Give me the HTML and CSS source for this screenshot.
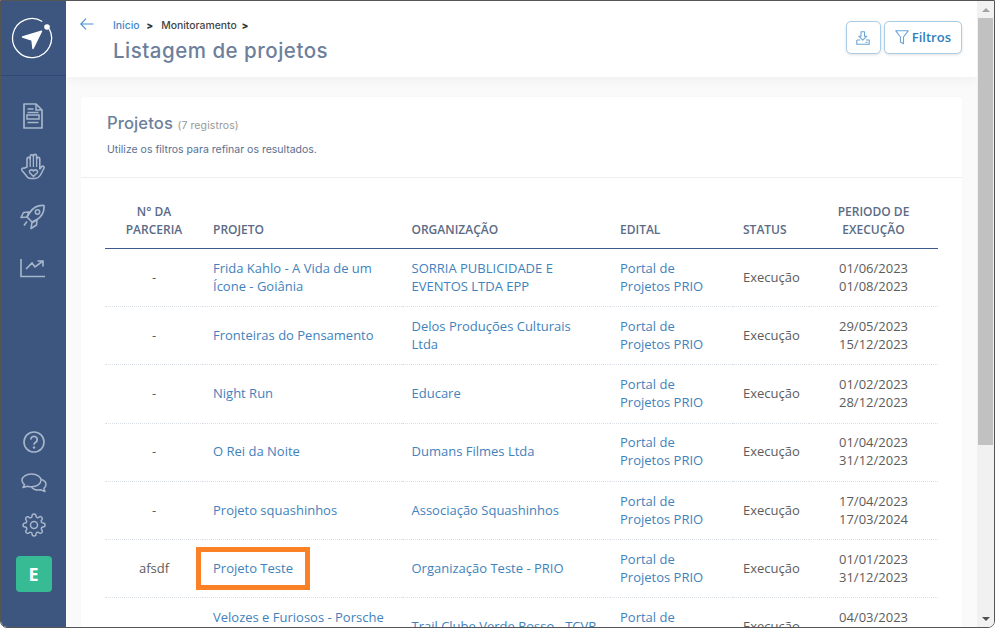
FILE: index.html
```html
<!DOCTYPE html>
<html lang="pt-BR">
<head>
<meta charset="utf-8">
<title>Listagem de projetos</title>
<link rel="stylesheet" href="styles.css">
</head>
<body>
<div class="window">
  <aside class="sidebar">
    <div class="brand">
      <svg class="brand-logo" viewBox="0 0 44 44" width="44" height="44">
        <path d="M32.300 5.500A19.500 19.500 0 1 0 39.200 12.800" fill="none" stroke="#fff" stroke-width="1.300"/>
        <circle cx="37" cy="11" r="2.800" fill="#fff"/>
        <path d="M12.500 21 31.500 15.200 23 32.500 22 24Z" fill="#fff" stroke="#fff" stroke-width="1.500" stroke-linejoin="round"/>
      </svg>
    </div>
    <nav class="nav-top">
      <svg class="nav-icon" viewBox="0 0 24 28" width="24" height="28"><path d="M3 2h12l6 6v18H3Z" fill="none" stroke="#a8b6cb" stroke-width="1.700" stroke-linejoin="round"/><path d="M15 2v6h6M6.500 7h6M6.500 10.500h11M6.500 20.500h11" fill="none" stroke="#a8b6cb" stroke-width="1.500"/><rect x="6" y="13" width="12" height="4" fill="none" stroke="#a8b6cb" stroke-width="1.500"/></svg>
      <svg class="nav-icon" viewBox="0 0 26 28" width="26" height="28"><path d="M7 14V6a1.600 1.600 0 0 1 3.200 0v-2.500a1.600 1.600 0 0 1 3.200 0V3a1.600 1.600 0 0 1 3.200 0v3a1.600 1.600 0 0 1 3.200 0v10l2-2.500c1.500-1 3 .5 2 2l-2.500 5c-1.500 3-3.500 5-6.500 5h-4c-2.500 0-4-1.500-5-3.500L2 17.500c-1-1.500.5-3 2-2.300Z" fill="none" stroke="#a8b6cb" stroke-width="1.600" stroke-linejoin="round"/><path d="M10.200 6v8M13.400 3v11M16.600 5v9" stroke="#a8b6cb" stroke-width="1.300"/><path d="M13.500 23.500 9.800 19.700c-1.500-2 1.500-4 3.700-1.800 2.200-2.200 5.200-.2 3.700 1.800Z" fill="none" stroke="#a8b6cb" stroke-width="1.500"/></svg>
      <svg class="nav-icon" viewBox="0 0 26 26" width="26" height="26"><path d="M24 1.500c-6-.5-11 2-14.500 7.500L7 13l5.500 5.500 4-2.500C22 12.500 24.500 7.500 24 1.500Z" fill="none" stroke="#a8b6cb" stroke-width="1.700" stroke-linejoin="round"/><circle cx="17.500" cy="8" r="2.200" fill="none" stroke="#a8b6cb" stroke-width="1.500"/><path d="M9 8 3.500 8.500 1 13.500l6-.5ZM17 15.500 16.500 21 11 24.500l1-6.500ZM7 17.500l-3 4" fill="none" stroke="#a8b6cb" stroke-width="1.600" stroke-linejoin="round"/></svg>
      <svg class="nav-icon nav-chart" viewBox="0 0 26 20" width="26" height="20"><path d="M1 0v17.500H25" fill="none" stroke="#a8b6cb" stroke-width="1.600"/><path d="M6 10l6-6 3 4 8-6M17.500 2H23v5.500" fill="none" stroke="#a8b6cb" stroke-width="1.600"/></svg>
    </nav>
    <nav class="nav-bottom">
      <svg class="nav-icon" viewBox="0 0 22 22" width="22" height="22"><circle cx="11" cy="11" r="10" fill="none" stroke="#a8b6cb" stroke-width="1.600"/><path d="M7.800 8.500a3.200 3.200 0 1 1 4.800 2.800c-1 .6-1.600 1.100-1.600 2.400" fill="none" stroke="#a8b6cb" stroke-width="1.800"/><circle cx="11" cy="16.500" r="1.200" fill="#a8b6cb"/></svg>
      <svg class="nav-icon" viewBox="0 0 26 20" width="26" height="20"><path d="M10.500 1C5 1 1 3.800 1 7.300c0 1.800 1 3.200 2.500 4.300L2 14.500l4.500-1.300c1.300.4 2.600.6 4 .6 5.500 0 9.500-2.900 9.500-6.500S16 1 10.500 1Z" fill="none" stroke="#a8b6cb" stroke-width="1.500" stroke-linejoin="round"/><path d="M20.500 6.500c2.700.9 4.500 2.800 4.500 5 0 1.500-.8 2.800-2.200 3.800l1.200 3.200-4.500-1.800c-3.500.8-7-.2-9-2.500" fill="none" stroke="#a8b6cb" stroke-width="1.500" stroke-linejoin="round"/></svg>
      <svg class="nav-icon" viewBox="0 0 24 24" width="24" height="24"><path d="M19.400 15a1.650 1.650 0 0 0 .33 1.820l.06.06a2 2 0 0 1 0 2.830 2 2 0 0 1-2.830 0l-.06-.06a1.650 1.650 0 0 0-1.820-.33 1.650 1.650 0 0 0-1 1.510V21a2 2 0 0 1-2 2 2 2 0 0 1-2-2v-.09A1.650 1.650 0 0 0 9 19.400a1.650 1.650 0 0 0-1.820.33l-.06.06a2 2 0 0 1-2.830 0 2 2 0 0 1 0-2.830l.06-.06a1.650 1.650 0 0 0 .33-1.820 1.650 1.650 0 0 0-1.510-1H3a2 2 0 0 1-2-2 2 2 0 0 1 2-2h.09A1.650 1.650 0 0 0 4.600 9a1.650 1.650 0 0 0-.33-1.820l-.06-.06a2 2 0 0 1 0-2.830 2 2 0 0 1 2.830 0l.06.06a1.650 1.650 0 0 0 1.820.33H9a1.650 1.650 0 0 0 1-1.510V3a2 2 0 0 1 2-2 2 2 0 0 1 2 2v.09a1.650 1.650 0 0 0 1 1.510 1.650 1.650 0 0 0 1.820-.33l.06-.06a2 2 0 0 1 2.830 0 2 2 0 0 1 0 2.830l-.06.06a1.650 1.650 0 0 0-.33 1.820V9a1.650 1.650 0 0 0 1.510 1H21a2 2 0 0 1 2 2 2 2 0 0 1-2 2h-.09a1.650 1.650 0 0 0-1.510 1Z" fill="none" stroke="#a8b6cb" stroke-width="1.500"/><circle cx="12" cy="12" r="3.500" fill="none" stroke="#a8b6cb" stroke-width="1.500"/></svg>
      <div class="avatar">E</div>
    </nav>
  </aside>

  <main class="main">
    <header class="topbar">
      <svg class="back" viewBox="0 0 14 12" width="14" height="12"><path d="M13.500 6H.8M6 .7.800 6 6 11.300" fill="none" stroke="#4a90d0" stroke-width="1.100"/></svg>
      <div class="heading">
        <div class="crumbs"><a class="crumb-link">Início</a><b class="sep">&gt;</b><span>Monitoramento</span><b class="sep sep-last">&gt;</b></div>
        <h1>Listagem de projetos</h1>
      </div>
      <div class="actions">
        <button class="btn btn-icon"><svg viewBox="0 0 14 14" width="14" height="14"><path d="M5 .8h3.500v4.400h2.300L6.800 9.200 2.800 5.200H5ZM.8 9v4.200h12.400V9H10M4 9H.8" fill="none" stroke="#6aa5d6" stroke-width="1.100" stroke-linejoin="round"/><path d="M9.500 11.300h2" stroke="#6aa5d6" stroke-width="1"/></svg></button>
        <button class="btn"><svg viewBox="0 0 14 15" width="14" height="15"><path d="M.8.800h12.400L8.500 7v6.800l-3-1.800V7Z" fill="none" stroke="#6aa5d6" stroke-width="1.100" stroke-linejoin="round"/></svg>Filtros</button>
      </div>
    </header>

    <section class="card">
      <div class="card-head">
        <h2>Projetos <small>(7 registros)</small></h2>
        <p>Utilize os filtros para refinar os resultados.</p>
      </div>
      <div class="table-wrap">
        <table>
          <colgroup><col class="c1"><col class="c2"><col class="c3"><col class="c4"><col class="c5"><col class="c6"></colgroup>
          <thead>
            <tr><th class="center">N° DA PARCERIA</th><th>PROJETO</th><th>ORGANIZAÇÃO</th><th>EDITAL</th><th>STATUS</th><th class="center">PERIODO DE EXECUÇÃO</th></tr>
          </thead>
          <tbody>
            <tr><td class="center">-</td><td><a>Frida Kahlo - A Vida de um Ícone - Goiânia</a></td><td><a>SORRIA PUBLICIDADE E EVENTOS LTDA EPP</a></td><td><a>Portal de Projetos PRIO</a></td><td>Execução</td><td class="center">01/06/2023<br>01/08/2023</td></tr>
            <tr><td class="center">-</td><td><a>Fronteiras do Pensamento</a></td><td><a>Delos Produções Culturais Ltda</a></td><td><a>Portal de Projetos PRIO</a></td><td>Execução</td><td class="center">29/05/2023<br>15/12/2023</td></tr>
            <tr><td class="center">-</td><td><a>Night Run</a></td><td><a>Educare</a></td><td><a>Portal de Projetos PRIO</a></td><td>Execução</td><td class="center">01/02/2023<br>28/12/2023</td></tr>
            <tr><td class="center">-</td><td><a>O Rei da Noite</a></td><td><a>Dumans Filmes Ltda</a></td><td><a>Portal de Projetos PRIO</a></td><td>Execução</td><td class="center">01/04/2023<br>31/12/2023</td></tr>
            <tr><td class="center">-</td><td><a>Projeto squashinhos</a></td><td><a>Associação Squashinhos</a></td><td><a>Portal de Projetos PRIO</a></td><td>Execução</td><td class="center">17/04/2023<br>17/03/2024</td></tr>
            <tr><td class="center">afsdf</td><td><a class="marked">Projeto Teste</a></td><td><a>Organização Teste - PRIO</a></td><td><a>Portal de Projetos PRIO</a></td><td>Execução</td><td class="center">01/01/2023<br>31/12/2023</td></tr>
            <tr><td class="center">-</td><td><a>Velozes e Furiosos - Porsche Cup Brasil</a></td><td><a>Trail Clube Verde Rosso - TCVR</a></td><td><a>Portal de Projetos PRIO</a></td><td>Execução</td><td class="center">04/03/2023<br>31/12/2023</td></tr>
          </tbody>
        </table>
      </div>
    </section>
  </main>

  <div class="scrollbar">
    <div class="arrow arrow-up"></div>
    <div class="track"><div class="thumb"></div></div>
    <div class="arrow arrow-down"></div>
  </div>
</div>
</body>
</html>
```
FILE: styles.css
```css
* { box-sizing: border-box; }
html, body { margin: 0; height: 100%; background: #fff; overflow: hidden; }
.window {
  width: 995px; height: 628px; display: flex; overflow: hidden;
  border: 1px solid #555; border-radius: 0 0 7px 7px;
  font-family: "Open Sans", "Noto Sans", sans-serif; font-size: 13px; color: #5c5c5c;
}
.sidebar { width: 65px; flex: none; background: #3c567f; display: flex; flex-direction: column; }
.brand { height: 75px; flex: none; border-bottom: 1px solid #2f4a75; display: flex; align-items: center; padding-left: 9px; }
.brand-logo { margin-top: -1px; }
.nav-top { display: flex; flex-direction: column; align-items: center; gap: 23px; margin-top: 26px; padding-right: 2px; }
.nav-chart { margin-top: 6px; }
.nav-bottom { display: flex; flex-direction: column; align-items: center; gap: 20px; margin-top: auto; padding-bottom: 35px; }
.nav-icon { display: block; }
.avatar { width: 36px; height: 36px; margin-top: -1px; border-radius: 4px; background: #36bb94; color: #fff; font: 700 18px/36px "Open Sans", sans-serif; text-align: center; }
.main { flex: 1; min-width: 0; background: #fafafa; display: flex; flex-direction: column; overflow: hidden; }
.topbar { height: 76px; flex: none; background: #fff; box-shadow: 0 2px 12px rgba(0,0,0,.05); display: flex; align-items: flex-start; padding: 17px 15px 0 14px; position: relative; }
.back { flex: none; }
.heading { margin-left: 19px; margin-top: 1px; }
.crumbs { display: flex; align-items: center; font: 500 10.400px/14px Inter, sans-serif; color: #444; }
.crumb-link { color: #3f87c6; }
.sep { margin: 0 8px 0 7px; font-size: 9.500px; font-weight: 900; line-height: 12px; color: #333; }
.sep-last { margin-left: 5px; }
h1 { margin: 5px 0 0; font: 500 20.500px/26px Inter, sans-serif; color: #6d7f9b; letter-spacing: .5px; }
.actions { margin-left: auto; margin-top: 3px; display: flex; gap: 3px; }
.btn { height: 33px; padding: 0 10px; border: 1px solid #a9cde6; border-radius: 5px; background: #fff; box-shadow: 0 1px 3px rgba(0,0,0,.12); color: #2f7fbe; font: 600 13px/1 "Open Sans", sans-serif; display: flex; align-items: center; gap: 3px; }
.btn-icon { width: 35px; justify-content: center; padding: 0; }
.card { margin: 20px 15px 0; background: #fff; flex: none; border-radius: 4px 4px 0 0; box-shadow: 0 0 6px rgba(0,0,0,.015); }
.card-head { height: 81px; border-bottom: 1px solid #eceef1; padding: 16px 26px 0; }
h2 { margin: 0; font: 500 16.600px/20px Inter, sans-serif; color: #6d7f9b; letter-spacing: .1px; }
h2 small { font: 400 10.500px/1 Inter, sans-serif; color: #999; }
.card-head p { margin: 10px 0 0; font: 400 10.500px/14px Inter, sans-serif; color: #5b6f90; }
.table-wrap { padding: 25px 24px 0; }
table { width: 833px; border-collapse: separate; border-spacing: 0; table-layout: fixed; }
.c1 { width: 98px; } .c2 { width: 198.500px; } .c3 { width: 208.500px; } .c4 { width: 123px; } .c5 { width: 76px; } .c6 { width: 129px; }
th { font-size: 12px; line-height: 17.500px; font-weight: 600; color: #5b6b86; text-align: left; vertical-align: bottom; padding: 0 10px 10px; border-bottom: 1px solid #3c5c8c; }
td { height: 58.200px; padding: 0 10px 1.400px; line-height: 18px; vertical-align: middle; border-bottom: 1px dotted #d9dee4; }
.center { text-align: center; }
a { color: #3f82bc; text-decoration: none; }
.marked { position: relative; display: inline-block; }
.marked::before { content: ""; position: absolute; left: -17px; right: -17px; top: -12px; bottom: -13px; border: 5px solid #fb8127; pointer-events: none; }
.scrollbar { width: 17px; flex: none; background: #f1f1f1; display: flex; flex-direction: column; align-items: center; }
.arrow { height: 17px; flex: none; width: 100%; position: relative; }
.arrow::after { content: ""; position: absolute; left: 4.500px; border-left: 4px solid transparent; border-right: 4px solid transparent; }
.arrow-up::after { top: 7px; border-bottom: 4px solid #a3a3a3; }
.arrow-down::after { top: 7px; border-top: 4px solid #505050; }
.track { flex: 1; width: 100%; padding: 0 1px; }
.thumb { height: 427px; background: #c1c1c1; }
```
